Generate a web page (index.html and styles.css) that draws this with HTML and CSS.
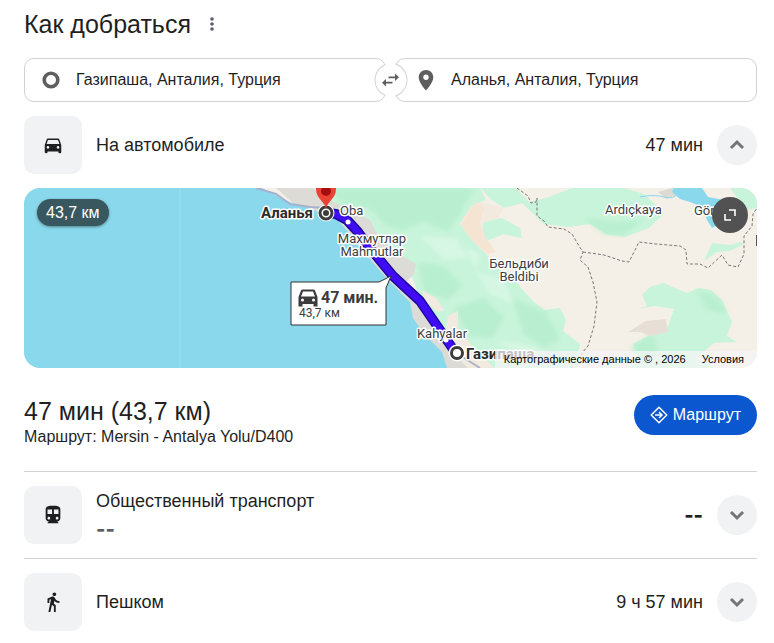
FILE: index.html
```
<!DOCTYPE html>
<html lang="ru">

<head>
  <meta charset="utf-8">
  <meta name="viewport" content="width=device-width">
  <title>Как добраться</title>

  <link rel="stylesheet" href="styles.css">
</head>

<body>
  <main class="directions">
    <header class="header">
      <h1 class="title">Как добраться</h1>
      <button class="more" type="button" aria-label="Ещё">
        <svg width="6" height="14" viewBox="0 0 6 14">
          <circle cx="3" cy="2" r="1.800" />
          <circle cx="3" cy="7" r="1.800" />
          <circle cx="3" cy="12" r="1.800" />
        </svg>
      </button>
    </header>

    <form class="places">
      <div class="place">
        <label for="from" aria-label="Откуда">
          <svg width="24" height="24" viewBox="0 0 24 24">
            <circle cx="12" cy="12" r="6.800" fill="none" stroke="#5e5e5e" stroke-width="3.600" />
          </svg>
        </label>
        <input id="from" type="text" value="Газипаша, Анталия, Турция">
      </div>
      <div class="place">
        <label for="to" aria-label="Куда">
          <svg width="24" height="24" viewBox="0 0 24 24">
            <path fill="#5e5e5e" d="M12 2C7.900 2 4.700 5.200 4.700 9.300 4.700 14.800 12 22.500 12 22.500s7.300-7.700 7.300-13.200C19.300 5.200 16.100 2 12 2zm0 10a2.700 2.700 0 1 1 0-5.400 2.700 2.700 0 0 1 0 5.400z" />
          </svg>
        </label>
        <input id="to" type="text" value="Аланья, Анталия, Турция">
      </div>
      <button class="swap" type="button" aria-label="Поменять местами">
        <svg width="18" height="14" viewBox="0 0 18 14">
          <path fill="#5e5e5e" d="M13.500 0.500 17.500 4.300 13.500 8V5.200H7V3.400h6.500zM4.500 6v2.800H11v1.800H4.500v2.900L0.500 9.700z" />
        </svg>
      </button>
    </form>

    <section class="mode">
      <span class="mode-icon">
        <svg width="24" height="24" viewBox="0 0 24 24">
          <path d="M18.920 6.010C18.720 5.420 18.160 5 17.500 5h-11c-.66 0-1.210.42-1.420 1.010L3 12v8c0 .55.45 1 1 1h1c.55 0 1-.45 1-1v-1h12v1c0 .55.45 1 1 1h1c.55 0 1-.45 1-1v-8l-2.080-5.990zM6.500 16c-.83 0-1.500-.67-1.500-1.500S5.670 13 6.500 13s1.500.67 1.500 1.500S7.330 16 6.500 16zm11 0c-.83 0-1.500-.67-1.500-1.500s.67-1.500 1.500-1.500 1.500.67 1.500 1.500-.67 1.500-1.500 1.500zM5 11l1.500-4.500h11L19 11H5z" />
        </svg>
      </span>
      <span class="mode-name">На автомобиле</span>
      <span class="mode-time">47 мин</span>
      <button class="toggle" type="button" aria-label="Свернуть">
        <svg width="24" height="24" viewBox="0 0 24 24"><path d="M6 15l6-6 6 6" /></svg>
      </button>
    </section>

    <div class="map">
      <svg class="map-canvas" viewBox="0 0 733 180" preserveAspectRatio="xMidYMid slice">
        <defs>
          <filter id="soft"><feGaussianBlur stdDeviation="2" /></filter>
        </defs>
        <rect width="733" height="180" fill="#f4f0e7" />

        <!-- forests -->
        <g fill="#c8f4db">
          <path d="M286 0L456 0 462 12 448 18 436 36 452 50 463 66 466 78 486 85 497 100 509 113 520 122 536 120 542 132 539 143 556 156 553 172 553 180 447 180 420 140 397 112 386 84 376 70 352 66 328 42 302 18z" />
          <path d="M456 0H492L505 14 522 10 548 0H600L620 6 633 18 640 26 625 40 601 49 584 47 566 36 545 39 520 36 498 15 480 20 468 12z" />
          <path d="M458 34L478 30 496 40 498 50 480 46 460 54z" />
          <path d="M612 121L623 118 618 107 626 99 640 95 651 100 663 105 674 100 687 102 699 113 702 122 708 133 703 148 713 154 690 155 672 170 690 180H606L615 168 609 156 624 148 642 144 650 121 631 118z" />
          <path d="M680 73L688 55 706 57 716 54 720 56 706 63 693 64z" />
          <path d="M706 0H733V20L722 22z" />
        </g>
        <g fill="#b2edcc" opacity=".7" filter="url(#soft)">
          <path d="M300 0H450L436 26 424 44 400 34 380 42 362 38 344 20 320 16z" />
          <path d="M394 74L420 78 438 98 424 112 400 104z" />
          <path d="M430 120L460 110 480 130 468 150 444 148z" />
          <path d="M488 110L522 124 536 150 520 160 500 146z" />
          <path d="M560 30L590 34 620 32 600 46 580 46z" />
          <path d="M672 102L692 108 704 126 684 122z" />
          <path d="M606 160L628 146 634 162 624 178z" />
        </g>
        <g fill="#dcf8e7" opacity=".7" filter="url(#soft)">
          <path d="M396 48L432 50 444 70 420 72z" />
          <path d="M452 84L480 92 490 116 466 106z" />
          <path d="M470 152L500 156 530 166 500 170z" />
          <path d="M440 58L456 66 452 82z" />
        </g>

        <!-- bare ground -->
        <g fill="#f3eadf">
          <path d="M458 14L480 20 474 30 456 36 458 50 470 62 462 66 448 52 436 36 446 20z" />
          <path d="M398 102L412 110 420 122 414 124 400 112z" />
          <path d="M424 128L434 123 434 140 450 160 470 180H430L420 150z" />
        </g>
        <path d="M452 13L460 20 456 34 462 50 472 64 464 66 448 52 437 37z" fill="#f6e2d0" opacity=".8" />
        <path d="M604 144L622 133 642 131 644 144 626 148 616 144z" fill="#e7ded6" />
        <path d="M634 4L648 0H660L655 6 642 11z" fill="#ddd9d3" />

        <!-- built-up coast -->
        <path d="M252 0H288L306 12 322 20 346 32 354 48 368 62 378 68 392 76 390 86 380 96 394 112 406 132 418 150 436 172 444 180H420L385 124 318 36 270 16z" fill="#dcdbd6" />

        <!-- water -->
        <path d="M0 0H238L255 9 268 15 282 19 292 23 304 24 314 32 326 46 338 62 350 76 366 94 386 114 389 130 398 143 406 152 418 164 423 180H0z" fill="#8ad8ec" />
        <path d="M650 0L648 4 656 11 666 14 678 19 683 32 688 40 692 38 692 28 714 15 700 12 684 9 678 0z" fill="#8ad8ec" />
        <path d="M616 9Q630 6 640 9T654 5" fill="none" stroke="#8ad8ec" stroke-width="1" />
        <path d="M156 0V180" stroke="#a3dfef" stroke-width="1" />

        <path d="M232 0L252 6 266 16 286 19 302 20" fill="none" stroke="#a4b2cf" stroke-width="2" />
        <path d="M437 168L456 180" stroke="#a9b4cb" stroke-width="2" />

        <!-- district borders -->
        <g fill="none" stroke="#777" stroke-width="1" stroke-dasharray="3 2">
          <path d="M493 0L504 8 507 15 512 14 513 10V28L520 33 524 39 540 41 548 46 555 58 559 64 556 72 564 79 569 94 573 114 570 138 564 158 558 165 556 176" />
          <path d="M559 64L580 67 598 73 605 74 615 54 632 56 656 58 662 62 663 76 676 76 684 80 698 67 704 77 714 79 720 66V48L728 38 729 26 733 20" />
        </g>
        <path d="M733 47V58" stroke="#555" stroke-width="2" />

        <!-- route -->
        <path d="M304 25L312 26 323 32 334 44 345 59 369 88 396 113 429 161" fill="none" stroke="#1d0a9e" stroke-width="10" stroke-linejoin="round" />
        <path d="M304 25L312 26 323 32 334 44 345 59 369 88 396 113 429 161" fill="none" stroke="#400cf5" stroke-width="7" stroke-linejoin="round" />
        <circle cx="324" cy="34" r="2.500" fill="#fff" />
        <circle cx="422" cy="152" r="2.500" fill="#fff" />

        <circle cx="302" cy="25" r="8.500" fill="#fff" />
        <circle cx="433" cy="165" r="8.500" fill="#fff" />
        <g fill="#fff" stroke="#3c3c3c">
          <circle cx="302" cy="25" r="6" stroke-width="3" />
          <circle cx="433" cy="165" r="5.500" stroke-width="3" />
        </g>
        <path d="M302 22C302 14 292 11 292 1V-4H312V1C312 11 302 14 302 22z" fill="#ea4335" />
        <circle cx="302" cy="25" r="3" fill="#3c3c3c" />
        <circle cx="302" cy="3" r="5" fill="#a50e0e" />

        <g class="label">
          <text class="city" x="237" y="30">Аланья</text>
          <text class="city" x="442" y="171">Газипаша</text>
          <text x="316" y="27">Oba</text>
          <text x="348" y="55" text-anchor="middle">Махмутлар</text>
          <text x="348" y="68" text-anchor="middle">Mahmutlar</text>
          <text x="418" y="150" text-anchor="middle">Kahyalar</text>
          <text x="495" y="80" text-anchor="middle">Бельдиби</text>
          <text x="495" y="93" text-anchor="middle">Beldibi</text>
          <text x="581" y="26">Ardıçkaya</text>
          <text x="670" y="27">Gör</text>
        </g>

        <path d="M267 94H355L367 88 362 100V137H267z" fill="#fff" stroke="#333" stroke-width="1" />
        <path transform="translate(274 99)" fill="#3c3c3c" fill-rule="evenodd" d="M4.500 2.500h11Q16.500 2.500 17 3.500L19.500 10V19.500H15.500V17H4.500V19.500H.5V10L3 3.500Q3.500 2.500 4.500 2.500zM5 4.500L3 9.500H17L15 4.500zM4.500 11.500a1.500 1.500 0 1 0 0 3 1.500 1.500 0 0 0 0-3zM15.500 11.500a1.500 1.500 0 1 0 0 3 1.500 1.500 0 0 0 0-3z" />
        <text class="tip-time" x="297" y="115">47 мин.</text>
        <text class="tip-distance" x="275" y="129">43,7 км</text>
      </svg>

      <span class="distance">43,7 км</span>
      <button class="expand" type="button" aria-label="Развернуть карту">
        <svg width="14" height="14" viewBox="0 0 14 14">
          <path d="M6 2h6v6M2 6v6h6" fill="none" stroke="#fff" stroke-width="1.600" />
        </svg>
      </button>
      <div class="credits">
        <span>Картографические данные © , 2026</span>
        <a href="#">Условия</a>
      </div>
    </div>

    <section class="summary">
      <div>
        <h2 class="title">47 мин (43,7 км)</h2>
        <p class="summary-route">Маршрут: Mersin - Antalya Yolu/D400</p>
      </div>
      <a class="go" href="#">
        <svg width="18" height="18" viewBox="0 0 18 18">
          <g fill="none" stroke="#fff" stroke-width="1.500" stroke-linejoin="round">
            <path d="M9 1.200L16.800 9 9 16.800 1.200 9z" />
            <path d="M5 9h7M9 6l3 3-3 3" stroke-linejoin="miter" />
          </g>
        </svg>
        Маршрут
      </a>
    </section>

    <section class="mode mode-line">
      <span class="mode-icon">
        <svg width="24" height="24" viewBox="0 0 24 24">
          <path d="M12 2c-4.420 0-8 .5-8 4v9.500C4 17.430 5.570 19 7.500 19L6 20.500v.5h12v-.5L16.500 19c1.930 0 3.500-1.570 3.500-3.500V6c0-3.500-3.580-4-8-4zM7.500 17c-.83 0-1.500-.67-1.500-1.500S6.670 14 7.500 14s1.500.67 1.500 1.500S8.330 17 7.500 17zm3.500-6H6V6h5v5zm5.500 6c-.83 0-1.500-.67-1.500-1.500s.67-1.500 1.500-1.500 1.500.67 1.500 1.500-.67 1.500-1.500 1.500zm1.500-6h-5V6h5v5z" />
        </svg>
      </span>
      <span class="mode-name">Общественный транспорт
        <span class="none">--</span>
      </span>
      <span class="mode-time none">--</span>
      <button class="toggle" type="button" aria-label="Развернуть">
        <svg width="24" height="24" viewBox="0 0 24 24"><path d="M6 9l6 6 6-6" /></svg>
      </button>
    </section>

    <section class="mode mode-line">
      <span class="mode-icon">
        <svg width="24" height="24" viewBox="0 0 24 24">
          <path d="M13.500 5.500c1.100 0 2-.9 2-2s-.9-2-2-2-2 .9-2 2 .9 2 2 2zM9.800 8.900L7 23h2.100l1.800-8 2.100 2v6h2v-7.500l-2.100-2 .6-3C14.800 12 16.800 13 19 13v-2c-1.900 0-3.500-1-4.300-2.400l-1-1.600c-.4-.6-1-1-1.700-1-.3 0-.5.1-.8.1L6 8.300V13h2V9.600l1.800-.7" />
        </svg>
      </span>
      <span class="mode-name">Пешком</span>
      <span class="mode-time">9 ч 57 мин</span>
      <button class="toggle" type="button" aria-label="Развернуть">
        <svg width="24" height="24" viewBox="0 0 24 24"><path d="M6 9l6 6 6-6" /></svg>
      </button>
    </section>
  </main>
</body>

</html>
```
FILE: styles.css
```
* {
  box-sizing: border-box;
}

body {
  margin: 0;
  background: #fff;
  color: #1f1f1f;
  font-family: "Liberation Sans", Arial, sans-serif;
  font-size: 16px;
}

button {
  padding: 0;
  border: none;
  cursor: pointer;
}

svg {
  display: block;
}

.directions {
  padding: 8px 17px 12px 24px;
}

.header {
  display: flex;
  align-items: center;
  gap: 14px;
  height: 32px;
}

.title {
  margin: 0;
  font-size: 25px;
  font-weight: 400;
  line-height: 32px;
}

.more {
  padding: 4px;
  background: none;
  fill: #5e5e6e;
}

.places {
  position: relative;
  display: grid;
  grid-template-columns: 1fr 1fr;
  gap: 9px;
  margin-top: 18px;
}

.place {
  display: flex;
  align-items: center;
  gap: 13px;
  height: 44px;
  padding: 0 14px;
  border: 1px solid #d2d2d2;
  border-radius: 10px;
}

.place + .place {
  padding-left: 18px;
}

.place input {
  flex: 1;
  min-width: 0;
  padding: 0;
  border: none;
  outline: none;
  background: none;
  color: inherit;
  font: inherit;
}

/* sits over the gap between the two fields */
.swap {
  position: absolute;
  top: 5px;
  left: 50%;
  display: flex;
  align-items: center;
  justify-content: center;
  width: 33px;
  height: 34px;
  border: 1px solid #d2d2d2;
  border-radius: 50%;
  background: #fff;
  transform: translateX(-50%);
}

.swap::before {
  content: "";
  position: absolute;
  top: -2px;
  bottom: -2px;
  left: 50%;
  width: 10px;
  background: #fff;
  transform: translateX(-50%);
}

.swap svg {
  position: relative;
}

.mode {
  display: flex;
  align-items: center;
  gap: 14px;
  padding: 14px 0;
  font-size: 18px;
  line-height: 28px;
}

.mode-line {
  border-top: 1px solid #d2d2d2;
}

.mode-icon {
  display: flex;
  align-items: center;
  justify-content: center;
  width: 58px;
  height: 58px;
  border-radius: 10px;
  background: #f1f2f4;
  fill: #1f1f1f;
}

.mode-icon svg {
  width: 22px;
  height: 22px;
}

.mode-name {
  flex: 1;
}

.none {
  font-family: Inter, sans-serif;
  font-size: 20px;
  font-weight: 800;
}

.mode-name .none {
  display: block;
  color: #5e5e5e;
}

.toggle {
  display: flex;
  align-items: center;
  justify-content: center;
  width: 40px;
  height: 40px;
  border-radius: 50%;
  background: #f1f2f4;
}

.toggle path {
  fill: none;
  stroke: #757575;
  stroke-width: 3;
}

.map {
  position: relative;
  height: 180px;
  border-radius: 16px;
  overflow: hidden;
}

.map-canvas {
  width: 100%;
  height: 100%;
}

.label {
  fill: #3c4043;
  stroke: #fff;
  stroke-width: 3px;
  stroke-linejoin: round;
  paint-order: stroke;
  font: 13px Roboto, sans-serif;
}

.city {
  fill: #2b2b2b;
  font-size: 15px;
  font-weight: 700;
}

.tip-time {
  fill: #3c3c3c;
  font: 700 16px Roboto, sans-serif;
}

.tip-distance {
  fill: #3c3c3c;
  font: 12px Roboto, sans-serif;
}

.distance {
  position: absolute;
  top: 11px;
  left: 13px;
  padding: 0 9px;
  border-radius: 14px;
  background: #38575f;
  box-shadow: 0 1px 3px rgba(0, 0, 0, 0.4);
  color: #fff;
  line-height: 27px;
}

.expand {
  position: absolute;
  top: 9px;
  right: 9px;
  display: flex;
  align-items: center;
  justify-content: center;
  width: 36px;
  height: 36px;
  border-radius: 50%;
  background: #525252;
}

.credits {
  position: absolute;
  right: 0;
  bottom: 0;
  display: flex;
  gap: 16px;
  padding: 0 13px 0 9px;
  background: rgba(245, 245, 245, 0.75);
  color: #000;
  font-size: 11px;
  line-height: 17px;
}

.credits a {
  color: inherit;
  text-decoration: none;
}

.summary {
  display: flex;
  align-items: flex-start;
  justify-content: space-between;
  padding: 27px 0 24px;
}

.summary-route {
  margin: 0;
  line-height: 20px;
}

.go {
  display: flex;
  align-items: center;
  gap: 5px;
  height: 40px;
  padding: 0 16px;
  border-radius: 20px;
  background: #0b57d0;
  color: #fff;
  text-decoration: none;
}
```
